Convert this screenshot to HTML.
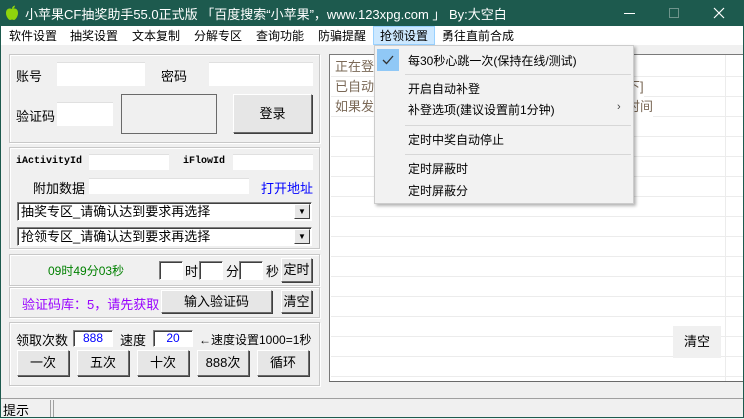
<!DOCTYPE html>
<html><head><meta charset="utf-8"><style>
*{margin:0;padding:0;box-sizing:border-box}
body{width:744px;height:418px;overflow:hidden;background:#f0f0f0;font-family:"Liberation Sans","Noto Sans CJK SC",sans-serif;font-size:12px;color:#000;position:relative}
.a{position:absolute;white-space:nowrap}
.title{left:0;top:0;width:744px;height:26px;background:#1d5a4e;color:#fff;font-size:13px}
.menu{left:1px;top:26px;width:742px;height:19px;background:#fff}
.frame{left:0;top:0;width:744px;height:418px;border:1px solid #1d5a4e;border-top:none;pointer-events:none}
.grp{position:absolute;border:1px solid #c8c8c8;box-shadow:inset 1px 1px 0 #fff,1px 1px 0 #fff}
.inp{position:absolute;background:#fff;border-top:1px solid #e0e0e0}
.btn{position:absolute;background:#e6e6e6;border:1px solid #fff;border-right-color:#6a6a6a;border-bottom-color:#6a6a6a;box-shadow:1px 1px 0 #404040;text-align:center}
.sunk{position:absolute;border:1px solid #808080;border-right-color:#fff;border-bottom-color:#fff;box-shadow:inset 1px 1px 0 #404040}
.cb{position:absolute;background:#fff;border:1px solid #808080;border-right-color:#fff;border-bottom-color:#fff;box-shadow:inset 1px 1px 0 #404040;height:19px;padding:1px 0 0 3px;font-size:13px;line-height:16px}
.cb i{position:absolute;right:1px;top:1px;width:16px;height:15px;background:#e6e6e6;border:1px solid #fff;border-right-color:#404040;border-bottom-color:#404040;font-style:normal;font-size:8px;text-align:center;line-height:13px}
.mono{font-family:"Liberation Mono",monospace;font-weight:bold;font-size:10px}
.row{position:absolute;left:331px;width:412px;height:20px;border-bottom:1px solid #ececec;color:#7a6856;font-size:13px;padding-left:4px;line-height:20px}
.dd{left:374px;top:45px;width:260px;height:159px;background:#f2f2f2;border:1px solid #ccc;box-shadow:2px 2px 3px rgba(0,0,0,.3)}
.mi{position:absolute;left:33px;font-size:12px}
.sep{position:absolute;left:30px;width:226px;height:1px;background:#d7d7d7}
</style></head><body>
<div class="a title">
 <svg class="a" style="left:5px;top:5px" width="14" height="16" viewBox="0 0 14 16"><path d="M7 4C5 3 1 3 1 8c0 4 3 7 4 7 1 0 1.5-.5 2-.5s1 .5 2 .5c1 0 4-3 4-7 0-5-4-5-6-4z" fill="#8ed40c"/><path d="M7 4C7 2 8 1 10 0.5 10 2 9 3.5 7 4z" fill="#8ed40c"/></svg>
 <span class="a" style="left:25px;top:4px">小苹果CF抽奖助手55.0正式版 「百度搜索“小苹果”，www.123xpg.com 」 By:大空白</span>
 <div class="a" style="left:624px;top:13px;width:11px;height:1px;background:#fff"></div>
 <div class="a" style="left:669px;top:8px;width:10px;height:10px;border:1px solid #6f948c"></div>
 <svg class="a" style="left:713px;top:7px" width="12" height="12"><path d="M1 1L11 11M11 1L1 11" stroke="#fff" stroke-width="1.2"/></svg>
</div>
<div class="a menu">
 <span class="a" style="left:8px;top:1px">软件设置</span>
 <span class="a" style="left:69px;top:1px">抽奖设置</span>
 <span class="a" style="left:131px;top:1px">文本复制</span>
 <span class="a" style="left:193px;top:1px">分解专区</span>
 <span class="a" style="left:255px;top:1px">查询功能</span>
 <span class="a" style="left:317px;top:1px">防骗提醒</span>
 <div class="a" style="left:372px;top:0;width:62px;height:19px;background:#cce8ff;border:1px solid #99d1ff"></div>
 <span class="a" style="left:379px;top:1px">抢领设置</span>
 <span class="a" style="left:441px;top:1px">勇往直前合成</span>
</div>

<!-- group 1 -->
<div class="grp" style="left:9px;top:54px;width:311px;height:89px"></div>
<span class="a" style="left:16px;top:66px;font-size:13px">账号</span>
<div class="inp" style="left:57px;top:62px;width:88px;height:24px"></div>
<span class="a" style="left:161px;top:66px;font-size:13px">密码</span>
<div class="inp" style="left:209px;top:62px;width:104px;height:24px"></div>
<span class="a" style="left:16px;top:106px;font-size:13px">验证码</span>
<div class="inp" style="left:57px;top:102px;width:56px;height:24px"></div>
<div class="a" style="left:121px;top:94px;width:96px;height:40px;border:1px solid #6a6a6a"></div>
<div class="btn" style="left:233px;top:94px;width:79px;height:39px;line-height:37px;font-size:13px">登录</div>

<!-- group 2 -->
<div class="grp" style="left:9px;top:147px;width:311px;height:102px"></div>
<span class="a mono" style="left:16px;top:156px">iActivityId</span>
<div class="inp" style="left:89px;top:154px;width:80px;height:16px"></div>
<span class="a mono" style="left:183px;top:156px">iFlowId</span>
<div class="inp" style="left:233px;top:154px;width:80px;height:16px"></div>
<span class="a" style="left:33px;top:178px;font-size:13px">附加数据</span>
<div class="inp" style="left:89px;top:178px;width:160px;height:16px"></div>
<span class="a" style="left:261px;top:178px;font-size:13px;color:#0000ff">打开地址</span>
<div class="cb" style="left:17px;top:202px;width:295px">抽奖专区_请确认达到要求再选择<i>▼</i></div>
<div class="cb" style="left:17px;top:227px;width:295px">抢领专区_请确认达到要求再选择<i>▼</i></div>

<!-- group 3 -->
<div class="grp" style="left:9px;top:254px;width:311px;height:32px"></div>
<span class="a" style="left:48px;top:262px;color:#008000">09时49分03秒</span>
<div class="sunk" style="left:159px;top:261px;width:24px;height:19px;background:#fff"></div>
<span class="a" style="left:185px;top:261px;font-size:13px">时</span>
<div class="sunk" style="left:199px;top:261px;width:24px;height:19px;background:#fff"></div>
<span class="a" style="left:226px;top:261px;font-size:13px">分</span>
<div class="sunk" style="left:239px;top:261px;width:24px;height:19px;background:#fff"></div>
<span class="a" style="left:266px;top:261px;font-size:13px">秒</span>
<div class="btn" style="left:281px;top:258px;width:31px;height:24px;line-height:22px;font-size:13px">定时</div>

<!-- group 4 -->
<div class="grp" style="left:9px;top:287px;width:311px;height:31px"></div>
<span class="a" style="left:22px;top:294px;color:#9900ff;font-size:13px">验证码库：5，请先获取</span>
<div class="btn" style="left:161px;top:290px;width:111px;height:23px;line-height:21px;font-size:13px">输入验证码</div>
<div class="btn" style="left:281px;top:290px;width:31px;height:23px;line-height:21px;font-size:13px">清空</div>

<!-- group 5 -->
<div class="grp" style="left:9px;top:322px;width:311px;height:64px"></div>
<span class="a" style="left:16px;top:330px;font-size:13px">领取次数</span>
<div class="sunk" style="left:73px;top:330px;width:40px;height:17px;background:#fff;color:#0000ff;text-align:center;line-height:14px">888</div>
<span class="a" style="left:120px;top:330px;font-size:13px">速度</span>
<div class="sunk" style="left:153px;top:330px;width:40px;height:17px;background:#fff;color:#0000ff;text-align:center;line-height:14px">20</div>
<span class="a" style="left:199px;top:331px;font-size:12px">←速度设置1000=1秒</span>
<div class="btn" style="left:17px;top:350px;width:52px;height:26px;line-height:24px;font-size:13px">一次</div>
<div class="btn" style="left:77px;top:350px;width:52px;height:26px;line-height:24px;font-size:13px">五次</div>
<div class="btn" style="left:137px;top:350px;width:52px;height:26px;line-height:24px;font-size:13px">十次</div>
<div class="btn" style="left:197px;top:350px;width:52px;height:26px;line-height:24px;font-size:13px">888次</div>
<div class="btn" style="left:257px;top:350px;width:52px;height:26px;line-height:24px;font-size:13px">循环</div>

<!-- list -->
<div class="a" style="left:329px;top:54px;width:415px;height:328px;background:#fff;border:1px solid #7a7a7a;border-right:none;border-bottom:1px solid #6a6a6a"></div>
<div class="row" style="top:57px">正在登</div>
<div class="row" style="top:77px">已自动</div>
<div class="row" style="top:97px">如果发</div>
<div class="row" style="top:117px"></div><div class="row" style="top:137px"></div><div class="row" style="top:157px"></div>
<div class="row" style="top:177px"></div><div class="row" style="top:197px"></div><div class="row" style="top:217px"></div>
<div class="row" style="top:237px"></div><div class="row" style="top:257px"></div><div class="row" style="top:277px"></div>
<div class="row" style="top:297px"></div><div class="row" style="top:317px"></div><div class="row" style="top:337px"></div>
<div class="row" style="top:357px"></div>
<div class="a" style="left:725px;top:55px;width:1px;height:326px;background:#ececec"></div>
<span class="a" style="left:627px;top:77px;color:#7a6856;font-size:13px;line-height:20px;background:#fff">下]</span>
<span class="a" style="left:627px;top:97px;color:#7a6856;font-size:13px;line-height:20px;background:#fff">时间</span>
<div class="a" style="left:673px;top:326px;width:48px;height:32px;background:#f0f0f0;text-align:center;line-height:32px;font-size:13px">清空</div>

<!-- status -->
<div class="a" style="left:1px;top:398px;width:742px;height:1px;background:#a0a0a0"></div>
<div class="a" style="left:50px;top:400px;width:1px;height:18px;background:#a0a0a0"></div>
<div class="a" style="left:53px;top:400px;width:1px;height:18px;background:#a0a0a0"></div>
<span class="a" style="left:3px;top:400px;font-size:13px">提示</span>

<!-- dropdown -->
<div class="a dd">
 <div class="a" style="left:2px;top:3px;width:22px;height:22px;background:#90c8f6"></div>
 <svg class="a" style="left:7px;top:9px" width="12" height="10"><path d="M1 5L4.5 8.5L11 1" stroke="#333" stroke-width="1.3" fill="none"/></svg>
 <span class="mi" style="top:6px">每30秒心跳一次(保持在线/测试)</span>
 <div class="sep" style="top:28px"></div>
 <span class="mi" style="top:34px">开启自动补登</span>
 <span class="mi" style="top:55px">补登选项(建议设置前1分钟)</span>
 <span class="a" style="left:242px;top:55px;font-size:11px;color:#444">›</span>
 <div class="sep" style="top:79px"></div>
 <span class="mi" style="top:85px">定时中奖自动停止</span>
 <div class="sep" style="top:108px"></div>
 <span class="mi" style="top:114px">定时屏蔽时</span>
 <span class="mi" style="top:136px">定时屏蔽分</span>
</div>
<div class="a frame"></div>
</body></html>
